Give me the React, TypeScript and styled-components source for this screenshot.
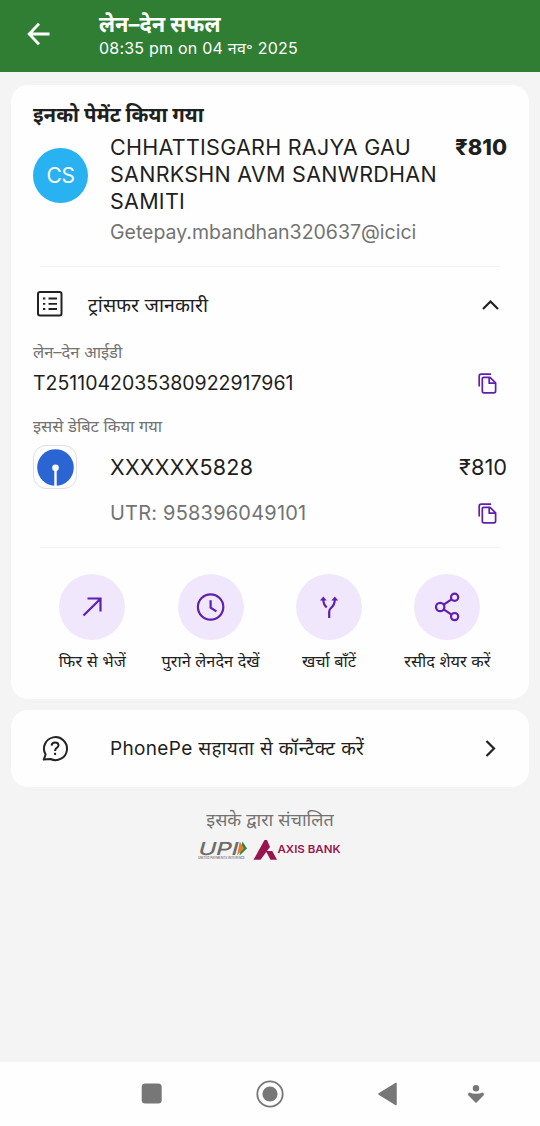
import React from "react";
import styled, { createGlobalStyle } from "styled-components";

const Global = createGlobalStyle`
  * { box-sizing: border-box; }
  body { margin: 0; background: #f4f4f4; }
`;

const Screen = styled.div`
  width: 540px;
  height: 1126px;
  display: flex;
  flex-direction: column;
  overflow: hidden;
  background: #f4f4f4;
  font-family: Inter, "Noto Sans", "Noto Sans Devanagari", sans-serif;
  color: #1f1f1f;
`;

const Text = styled.div<{ $size: number; $line: number; $track?: number; $weight?: number; $color?: string }>`
  font-size: ${(p) => p.$size}px;
  line-height: ${(p) => p.$line}px;
  height: ${(p) => p.$line}px;
  letter-spacing: ${(p) => p.$track ?? 0}px;
  font-weight: ${(p) => p.$weight ?? 400};
  color: ${(p) => p.$color ?? "inherit"};
  white-space: nowrap;
`;

const Header = styled.header`
  flex: none;
  height: 72px;
  display: flex;
  gap: 49px;
  padding: 11px 0 0 27px;
  background: #2f7e33;
  color: #fff;
`;

const BackIcon = styled.svg`
  margin-top: 11px;
`;

const Main = styled.main`
  flex: 1;
  display: flex;
  flex-direction: column;
  padding: 13px 11px 0;
`;

const Card = styled.section`
  background: #fefefe;
  border-radius: 17px;
`;

const PaymentCard = styled(Card)`
  height: 614px;
  padding: 16px 22px 0;
  display: flex;
  flex-direction: column;
`;

const PayeeRow = styled.div`
  display: flex;
  margin-top: 6px;
  height: 132px;
`;

const Avatar = styled.div`
  width: 55px;
  height: 55px;
  margin: 14px 22px 0 0;
  border-radius: 50%;
  background: #29b2f2;
  color: #fff;
  display: grid;
  place-items: center;
`;

const Grow = styled.div`
  flex: 1;
  min-width: 0;
`;

const Divider = styled.div`
  flex: none;
  height: 1px;
  margin: 0 7px;
  background: #f3f3f3;
`;

const Row = styled.div<{ $height: number; $top?: number }>`
  flex: none;
  display: flex;
  align-items: center;
  height: ${(p) => p.$height}px;
  margin-top: ${(p) => p.$top ?? 0}px;
`;

const IconSlot = styled.div<{ $width: number; $inset?: number; $end?: boolean }>`
  width: ${(p) => p.$width}px;
  padding-left: ${(p) => (p.$end ? 0 : p.$inset ?? 0)}px;
  padding-right: ${(p) => (p.$end ? p.$inset ?? 0 : 0)}px;
  display: flex;
  justify-content: ${(p) => (p.$end ? "flex-end" : "flex-start")};
`;

const BankBadge = styled.div`
  width: 44px;
  height: 44px;
  border: 1px solid #e0e0e4;
  border-radius: 13px;
  display: grid;
  place-items: center;
`;

const Actions = styled.div`
  display: grid;
  grid-template-columns: repeat(4, 118.4px);
  margin: 26px 0 0 0;
`;

const Action = styled.button`
  border: 0;
  padding: 0;
  background: none;
  font: inherit;
  color: inherit;
  display: flex;
  flex-direction: column;
  align-items: center;
  gap: 9px;
`;

const ActionCircle = styled.span`
  width: 66px;
  height: 66px;
  border-radius: 50%;
  background: #f1e7fd;
  display: grid;
  place-items: center;
`;

const HelpCard = styled(Card)`
  height: 77px;
  margin-top: 11px;
  padding: 0 22px;
  display: flex;
  align-items: center;
`;

const Footer = styled.footer`
  display: flex;
  flex-direction: column;
  align-items: center;
  margin-top: 20px;
`;

const Logos = styled.div`
  display: flex;
  margin-top: 5px;
`;

const NavBar = styled.nav`
  flex: none;
  height: 64px;
  background: #fefefe;
  display: flex;
  align-items: center;
  padding: 0 0 1px 141px;
`;

const NavIcon = styled.svg<{ $left?: number }>`
  margin-left: ${(p) => p.$left ?? 0}px;
`;

const PURPLE = "#5f1fb0";
const GREY = "#737373";

const CopyIcon = () => (
  <svg width="19" height="21" viewBox="0 0 19 21" fill="none" stroke={PURPLE} strokeWidth="1.7" strokeLinejoin="round">
    <path d="M1.2 13.5V3.2Q1.2 1.2 3.2 1.2H13" />
    <path d="M5.9 4.3H12L17.6 9.8V18Q17.6 19.9 15.9 19.9H6Q4.3 19.9 4.3 18V5.9Q4.3 4.3 5.9 4.3Z" />
    <path d="M11.2 4.5V10.2H17.2" />
  </svg>
);

const ListIcon = () => (
  <svg width="26" height="28" viewBox="0 0 26 28" fill="none" stroke="#222" strokeWidth="1.8">
    <rect x="1" y="1" width="23.5" height="23.5" rx="2" strokeWidth="2" />
    <path d="M11.5 7.5H20M11.5 12.8H20M11.5 18H20M6 7.5H8.3M6 12.8H8.3M6 18H8.3" />
  </svg>
);

const actions = [
  {
    label: "फिर से भेजें",
    icon: <path d="M7.5 24.5 24.3 8M11.5 7.5H24.5V20.5" />,
  },
  {
    label: "पुराने लेनदेन देखें",
    icon: (
      <>
        <circle cx="15.6" cy="16" r="12.7" />
        <path d="M15.6 9.2V16.6L21.4 20.4" />
      </>
    ),
  },
  {
    label: "खर्चा बाँटें",
    icon: (
      <>
        <path d="M16.2 27V20.5Q16.2 18.6 18 17Q21.8 13.8 21.8 8.5M10.3 8.5Q10.3 13.6 13.8 16.4" />
        <path d="M10.3 6.8 8.6 8.8H12ZM21.8 6.8 20.1 8.8H23.5Z" fill={PURPLE} strokeWidth="1.6" />
      </>
    ),
  },
  {
    label: "रसीद शेयर करें",
    icon: (
      <>
        <circle cx="9.2" cy="16" r="4.2" />
        <circle cx="23.6" cy="6.3" r="3.6" />
        <circle cx="23.6" cy="25.6" r="3.6" />
        <path d="M12.7 13.7 20.5 8.3M12.7 18.4 20.5 23.6" />
      </>
    ),
  },
];

export default function App() {
  return (
    <Screen lang="hi">
      <Global />
      <Header>
        <BackIcon width="23" height="24" viewBox="0 0 23 24" fill="none" stroke="#fff" strokeWidth="2.8">
          <path d="M22.5 12H3M12 1.8 2.2 12 12 22.2" />
        </BackIcon>
        <div>
          <Text $size={21.8} $line={27} $weight={700}>लेन–देन सफल</Text>
          <Text $size={16} $line={20} $track={0.22}>08:35 pm on 04 नव॰ 2025</Text>
        </div>
      </Header>

      <Main>
        <PaymentCard>
          <Text $size={20.4} $line={27} $weight={700}>इनको पेमेंट किया गया</Text>
          <PayeeRow>
            <Avatar>
              <Text $size={21} $line={28} $track={-0.4}>CS</Text>
            </Avatar>
            <Grow>
              <Text $size={21.5} $line={27} $track={0.27}>CHHATTISGARH RAJYA GAU</Text>
              <Text $size={21.5} $line={27} $track={0.27}>SANRKSHN AVM SANWRDHAN</Text>
              <Text $size={21.5} $line={27} $track={0.27}>SAMITI</Text>
              <Text $size={19.5} $line={35} $color={GREY}>Getepay.mbandhan320637@icici</Text>
            </Grow>
            <Text $size={21.8} $line={27} $weight={800}>₹810</Text>
          </PayeeRow>
          <Divider />

          <Row $height={42} $top={17}>
            <IconSlot $width={55} $inset={4}><ListIcon /></IconSlot>
            <Grow><Text $size={19.5} $line={27}>ट्रांसफर जानकारी</Text></Grow>
            <IconSlot $width={30} $inset={8} $end>
              <svg width="17" height="10" viewBox="0 0 17 10" fill="none" stroke="#222" strokeWidth="2.2">
                <path d="M1 9 8.5 1.5 16 9" />
              </svg>
            </IconSlot>
          </Row>
          <Row $height={24} $top={14}>
            <Text $size={16.5} $line={24} $color={GREY}>लेन–देन आईडी</Text>
          </Row>
          <Row $height={30} $top={4}>
            <Grow><Text $size={19.5} $line={30}>T2511042035380922917961</Text></Grow>
            <IconSlot $width={30} $inset={10} $end><CopyIcon /></IconSlot>
          </Row>
          <Row $height={24} $top={16}>
            <Text $size={16.5} $line={24} $color={GREY}>इससे डेबिट किया गया</Text>
          </Row>
          <Row $height={44} $top={7}>
            <IconSlot $width={77}>
              <BankBadge>
                <svg width="37" height="37" viewBox="0 0 37 37">
                  <circle cx="18.5" cy="18.5" r="18.3" fill="#2b65d3" />
                  <path d="M18.5 19V37" stroke="#fff" strokeWidth="2.4" />
                  <circle cx="18.5" cy="18.7" r="3.3" fill="#fff" />
                </svg>
              </BankBadge>
            </IconSlot>
            <Grow><Text $size={21.5} $line={30} $track={0.25}>XXXXXX5828</Text></Grow>
            <Text $size={21.8} $line={30}>₹810</Text>
          </Row>
          <Row $height={30} $top={9}>
            <IconSlot $width={77} />
            <Grow><Text $size={20} $line={30} $track={0.2} $color={GREY}>UTR: 958396049101</Text></Grow>
            <IconSlot $width={30} $inset={10} $end><CopyIcon /></IconSlot>
          </Row>
          <Row $height={19} />
          <Divider />

          <Actions>
            {actions.map((a) => (
              <Action key={a.label}>
                <ActionCircle>
                  <svg width="32" height="32" viewBox="0 0 32 32" fill="none" stroke={PURPLE} strokeWidth="2.2">
                    {a.icon}
                  </svg>
                </ActionCircle>
                <Text $size={16.3} $line={24}>{a.label}</Text>
              </Action>
            ))}
          </Actions>
        </PaymentCard>

        <HelpCard>
          <IconSlot $width={77} $inset={9}>
            <svg width="27" height="27" viewBox="0 0 27 27" fill="none" stroke="#222" strokeWidth="2">
              <path d="M3.6 19.5A11.5 11.5 0 1 1 8.5 24L1.8 24.6Z" strokeLinejoin="round" />
              <path d="M9.6 10.6Q9.9 7.4 13.2 7.4Q16.5 7.4 16.5 10.3Q16.5 12 14.5 13.2Q13.1 14.1 13.1 16" />
              <path d="M13.1 17.8V20" />
            </svg>
          </IconSlot>
          <Grow><Text $size={19} $line={30} $track={0.34}>PhonePe सहायता से कॉन्टैक्ट करें</Text></Grow>
          <IconSlot $width={30} $inset={11} $end>
            <svg width="11" height="17" viewBox="0 0 11 17" fill="none" stroke="#222" strokeWidth="2.2">
              <path d="M1.5 1 9 8.5 1.5 16" />
            </svg>
          </IconSlot>
        </HelpCard>

        <Footer>
          <Text $size={18} $line={26} $color={GREY}>इसके द्वारा संचालित</Text>
          <Logos>
            <svg width="144" height="24" viewBox="0 0 144 24">
              <text x="0" y="16.6" transform="translate(1 0) skewX(-3)" fontFamily="Inter" fontStyle="italic" fontSize="18" fontWeight="500" fill="#6c6c6c" textLength="40" lengthAdjust="spacingAndGlyphs">UPI</text>
              <path d="M44.5 3.6 49 10.5 41.5 17.5Z" fill="#23894a" />
              <path d="M41.8 3.6 46 10.5 39 17.5Z" fill="#ee7b2d" />
              <text x="0" y="20.6" fontFamily="Inter" fontSize="3.2" fontWeight="600" fill="#7c7c7c" textLength="47" lengthAdjust="spacingAndGlyphs">UNITED PAYMENTS INTERFACE</text>
              <path d="M66.5 2H69L72 9 62.5 21.8H55.5ZM67.8 13.1H74.3L79 21.8H72.5Z" fill="#98144f" />
              <text x="79.5" y="15" fontFamily="Inter" fontSize="10.8" fontWeight="600" fill="#98144f" textLength="63" lengthAdjust="spacingAndGlyphs">AXIS BANK</text>
            </svg>
          </Logos>
        </Footer>
      </Main>

      <NavBar>
        <NavIcon width="21" height="21" viewBox="0 0 21 21">
          <rect x="0.7" y="0.5" width="20" height="20" rx="3.5" fill="#777" />
        </NavIcon>
        <NavIcon $left={94} width="28" height="28" viewBox="0 0 28 28">
          <circle cx="14" cy="14" r="12.7" fill="none" stroke="#777" strokeWidth="1.8" />
          <circle cx="14" cy="14" r="7.6" fill="#777" />
        </NavIcon>
        <NavIcon $left={94} width="19" height="24" viewBox="0 0 19 24">
          <path d="M1 12 18 1.5V22.5Z" fill="#777" stroke="#777" strokeWidth="1.5" strokeLinejoin="round" />
        </NavIcon>
        <NavIcon $left={70} width="18" height="20" viewBox="0 0 18 20">
          <circle cx="9" cy="4.2" r="3.2" fill="#777" />
          <path d="M2 8.5Q9 11 16 8.5Q17.8 10.5 16 12L9 19 2 12Q0.2 10.5 2 8.5Z" fill="#777" />
        </NavIcon>
      </NavBar>
    </Screen>
  );
}
